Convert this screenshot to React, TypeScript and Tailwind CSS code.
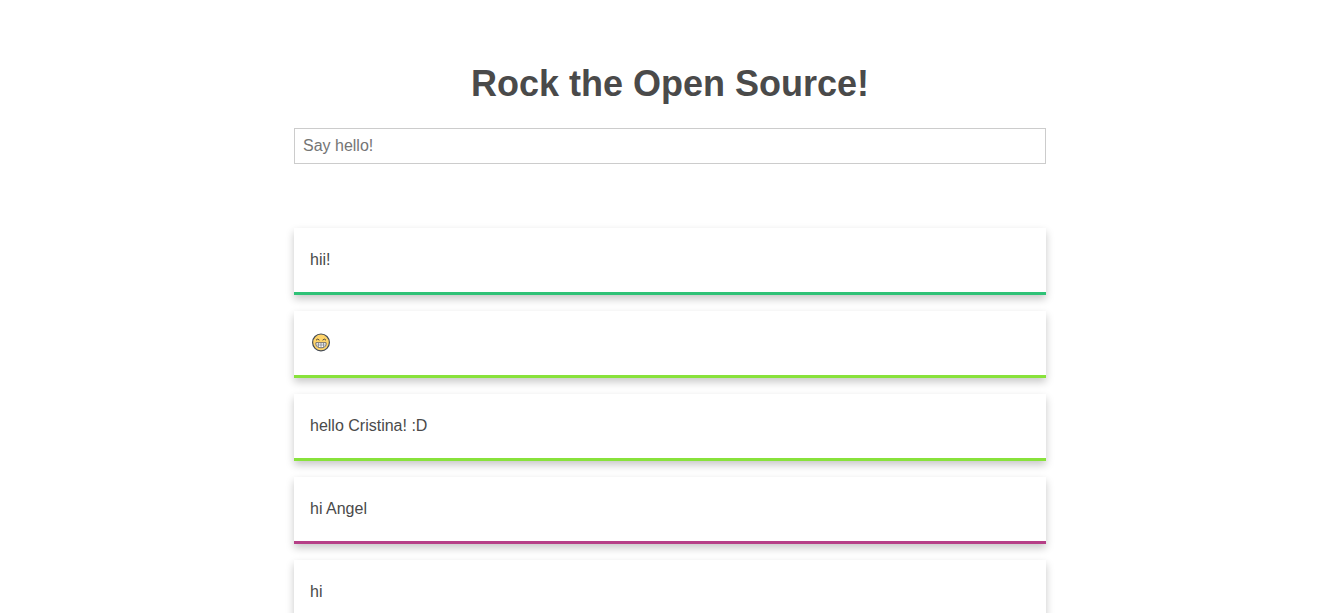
import React, { useState } from "react";

type Message = { id: number; body: React.ReactNode; border: string };

function GrinEmoji() {
  return (
    <svg role="img" aria-label="Grinning face" viewBox="-1 0 20 20" className="mx-px block size-5">
      <circle cx="9" cy="9.4" r="8.4" fill="#ffd469" stroke="#454b54" strokeWidth="1.2" />
      <path d="M4 7.2Q5.7 5 7.4 7.2M10.6 7.2Q12.3 5 14 7.2" fill="none" stroke="#50483c" strokeWidth="1" />
      <path d="M3.9 9.7H14.1V11.4Q13.6 14.8 9 14.8Q4.4 14.8 3.9 11.4Z" fill="#fff" stroke="#5f6268" strokeWidth="0.9" />
      <path d="M4.3 12H13.7M6.5 9.8V14.1M9 9.8V14.5M11.5 9.8V14.1" fill="none" stroke="#74767b" strokeWidth="0.7" />
    </svg>
  );
}

const initialMessages: Message[] = [
  { id: 1, body: "hii!", border: "border-[#2fc277]" },
  { id: 2, body: <GrinEmoji />, border: "border-[#88e23b]" },
  { id: 3, body: "hello Cristina! :D", border: "border-[#88e23b]" },
  { id: 4, body: "hi Angel", border: "border-[#b63f87]" },
  { id: 5, body: "hi", border: "border-[#2fc277]" },
];

export default function App() {
  const [messages, setMessages] = useState(initialMessages);
  const [draft, setDraft] = useState("");

  const submit = (event: React.FormEvent) => {
    event.preventDefault();
    const text = draft.trim();
    if (!text) return;
    setMessages([{ id: messages.length + 1, body: text, border: "border-[#2fc277]" }, ...messages]);
    setDraft("");
  };

  return (
    <main className="min-h-screen bg-white px-4 py-16 font-['Liberation_Sans',Arial,sans-serif] text-base text-[#4a4a4a]">
      <div className="mx-auto max-w-[752px]">
        <h1 className="text-center text-4xl leading-10 font-bold">Rock the Open Source!</h1>
        <form onSubmit={submit} className="mt-6">
          <input
            type="text"
            aria-label="Say hello!"
            placeholder="Say hello!"
            value={draft}
            onChange={(event) => setDraft(event.target.value)}
            className="block h-9 w-full border border-[#cccccc] bg-white px-2 placeholder:text-[#757575]"
          />
        </form>
        <ul className="mt-16 flex flex-col gap-4">
          {messages.map((message) => (
            <li
              key={message.id}
              className={`flex h-[67px] items-center border-b-[3px] bg-white px-4 shadow-[0_4px_8px_rgba(0,0,0,0.22)] ${message.border}`}
            >
              {message.body}
            </li>
          ))}
        </ul>
      </div>
    </main>
  );
}
